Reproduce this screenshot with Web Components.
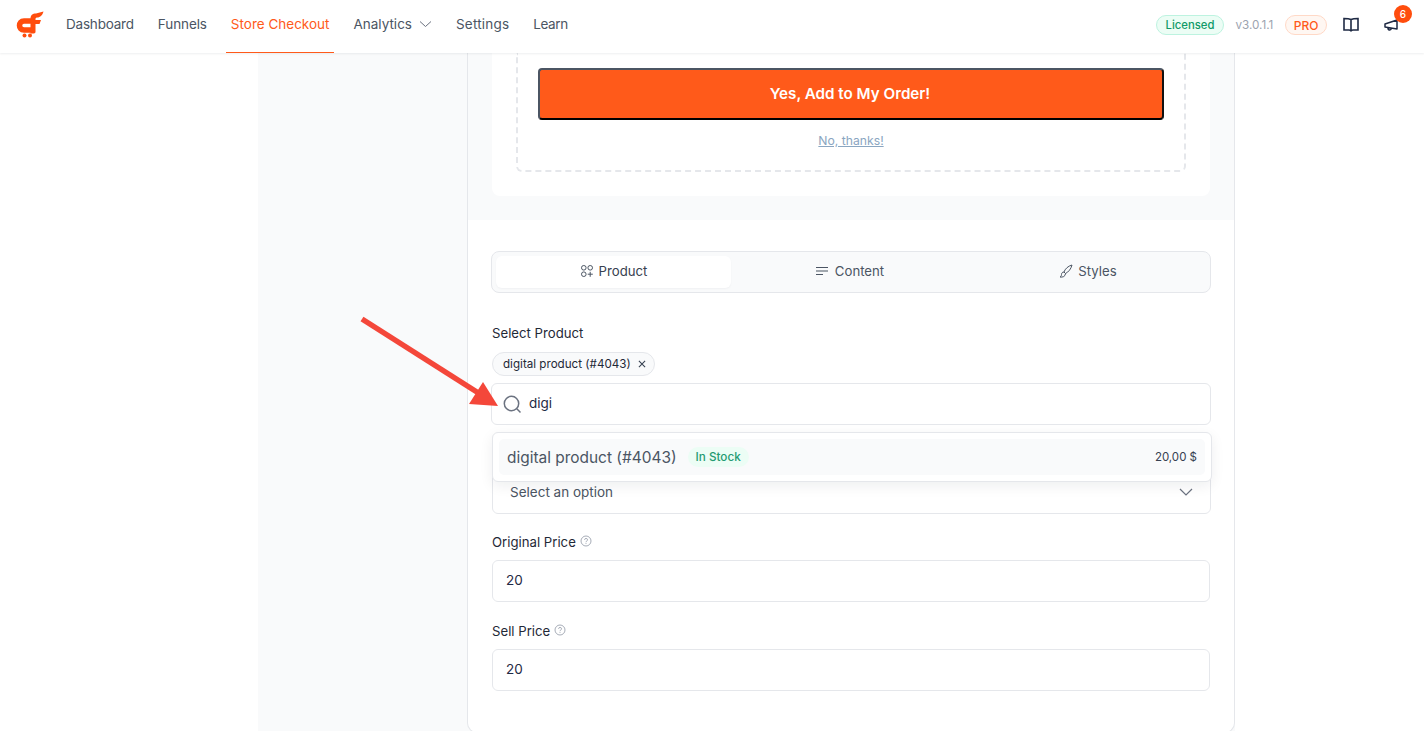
<!DOCTYPE html>
<html lang="en"><head><meta charset="utf-8"><title>Store Checkout</title>
<style>
html,body{margin:0;height:731px;overflow:hidden;background:#fff;font-family:Inter,"Noto Sans",sans-serif;color:#1f2937}
</style></head><body>
<app-shell>
  <app-nav slot="nav"></app-nav>
  <offer-preview></offer-preview>
  <tab-bar></tab-bar>
  <product-form></product-form>
</app-shell>
<script>
function comp(name,html){
  const t=document.createElement('template');t.innerHTML=html;
  customElements.define(name,class extends HTMLElement{
    constructor(){super();this.attachShadow({mode:'open'}).appendChild(t.content.cloneNode(true))}
  });
}
comp('app-shell',`<style>
:host{display:block;position:relative;height:731px;overflow:hidden}
.work{margin-left:258px;width:977px;height:678px;background:#f9fafb;padding-left:209px;box-sizing:border-box}
.card{width:768px;height:680px;box-sizing:border-box;background:#fff;border:1px solid #e5e7eb;border-top:0;border-radius:0 0 10px 10px;overflow:hidden}
.arrow{position:absolute;left:355px;top:312px;width:150px;height:100px;pointer-events:none}
</style>
<slot name="nav"></slot>
<div class="work"><div class="card"><slot></slot></div></div>
<svg class="arrow" viewBox="355 312 150 100"><path d="M362 319L480 394" stroke="#f4473a" stroke-width="5.500" fill="none"/><path d="M498 406L469 404L483 382Z" fill="#f4473a"/></svg>`);

comp('nav-link',`<style>
:host{display:flex;align-items:center;height:53px;box-sizing:border-box;padding:0 5px 5px;margin:0 7px;font-size:13.5px;color:#4b5563;gap:7px;white-space:nowrap;border-bottom:1px solid transparent}
:host([active]){color:#ff5a1a;border-bottom-color:#ff5a1a}
</style><slot></slot>`);

comp('status-pill',`<style>
:host{display:inline-flex;align-items:center;height:20px;box-sizing:border-box;padding:0 9px;border-radius:10px;font-size:11.3px;font-weight:500;border:1px solid #bdf3e0;background:#ecfdf5;color:#119a68}
:host([tone=pro]){border-color:#ffd9c7;background:#fff7f2;color:#ff5a1a;font-size:12px;padding:0 7.5px}
</style><slot></slot>`);

comp('app-nav',`<style>
:host{display:flex;align-items:center;height:53px;background:#fff;box-shadow:0 1px 2px rgba(17,24,39,.07);position:relative;z-index:2;padding:0 15px 0 16px;box-sizing:border-box}
.logo{width:28px;height:28px;margin:0 10px 3px 0;flex:none}
.links{display:flex;margin-right:auto}
.right{display:flex;align-items:center;margin-bottom:3px}
.ver{font-size:11.7px;color:#9ca3af;margin:0 12px 0 11px}
.book{margin-left:15px;width:18px;height:18px}
.bell{position:relative;margin:0 8px 0 23px;width:18px;height:18px}
.bell svg{width:18px;height:18px;display:block}
.count{position:absolute;left:11px;top:-11px;width:18px;height:18px;border-radius:50%;background:#ff4d0d;color:#fff;font-size:10px;font-weight:500;display:flex;align-items:center;justify-content:center}
.chev{width:13px;height:12px}
</style>
<svg class="logo" viewBox="16 11 28 28"><path d="M31 21H24C21 21 19.500 23 19.500 25.500C19.500 28 21 30 24 30H33" fill="none" stroke="#ff4d0d" stroke-width="5.500"/><path d="M30.500 32V19C30.500 15 32.500 13.500 36 13.500L43.500 11.500C42.500 15 40.500 17.500 37 17.500C35.500 17.500 35.500 18.500 35.500 20H41L39.500 24H35.500V32C35.500 33 34 33.500 33 33.500H30.500Z" fill="#ff4d0d"/><circle cx="24.500" cy="35.500" r="2" fill="#ff4d0d"/><circle cx="30" cy="35.500" r="2" fill="#ff4d0d"/></svg>
<div class="links">
<nav-link style="letter-spacing:-.2px">Dashboard</nav-link><nav-link style="letter-spacing:-.1px">Funnels</nav-link><nav-link active>Store Checkout</nav-link>
<nav-link>Analytics<svg class="chev" viewBox="0 0 13 12"><path d="M1 3.500L6.500 8.500L12 3.500" fill="none" stroke="#6b7280" stroke-width="1"/></svg></nav-link>
<nav-link style="letter-spacing:.2px">Settings</nav-link><nav-link style="letter-spacing:-.4px">Learn</nav-link></div>
<div class="right"><status-pill>Licensed</status-pill><span class="ver">v3.0.1.1</span><status-pill tone="pro">PRO</status-pill>
<svg class="book" viewBox="0 0 18 18"><path d="M9 3.500C7.500 2.800 5 2.500 2 2.500V14H7C8 14 9 14.500 9 15.500C9 14.500 10 14 11 14H16V2.500C13 2.500 10.500 2.800 9 3.500ZM9 3.500V15.500" fill="none" stroke="#1f2a44" stroke-width="1.600"/></svg>
<div class="bell"><svg viewBox="0 0 18 18"><path d="M2 8L14 4V13L2 11ZM5 11.500C4.500 14.500 8 15 8.500 12" fill="none" stroke="#1f2a44" stroke-width="1.500" stroke-linejoin="round"/></svg><span class="count">6</span></div></div>`);

comp('offer-preview',`<style>
:host{display:block;background:#f9fafb;padding:0 24px 24px;height:143px}
.panel{height:143px;background:#fff;border-radius:0 0 8px 8px;padding:0 24px;box-sizing:border-box}
.dash{height:119px;box-sizing:border-box;border:2px dashed #e5e7eb;border-top:0;border-radius:0 0 6px 6px;padding:15px 20px 0;display:flex;flex-direction:column;align-items:center}
button{all:unset;box-sizing:border-box;width:100%;height:52px;padding:0 2px 2px 0;background:#ff5a1a;border:2px solid #4b5563;border-bottom-color:#000;border-right-color:#111;border-radius:4px;color:#fff;font:600 15.200px Inter,sans-serif;text-align:center}
a{margin-top:13px;font-size:12.200px;color:#8aa6c1;text-decoration:underline}
</style><div class="panel"><div class="dash"><button>Yes, Add to My Order!</button><a>No, thanks!</a></div></div>`);

comp('tab-item',`<style>
:host{flex:1;display:flex;align-items:center;justify-content:center;gap:5px;font-size:13.200px;color:#4b5563;border-radius:6px;padding-bottom:2px;box-sizing:border-box}
:host([active]){flex:none;width:235px;background:#fff;color:#374151;box-shadow:0 1px 2px rgba(17,24,39,.04)}
</style><slot></slot>`);

comp('tab-bar',`<style>
:host{display:flex;margin:31px 23px 0;height:42px;box-sizing:border-box;padding:4px;background:#f9fafb;border:1px solid #e5e7eb;border-radius:8px;gap:2.500px}
svg{width:14px;height:14px}
</style>
<tab-item active><svg viewBox="0 0 14 14" fill="none" stroke="#4b5563" stroke-width="1"><circle cx="3.800" cy="3.800" r="2.300"/><circle cx="10.200" cy="3.800" r="2.300"/><circle cx="3.800" cy="10.200" r="2.300"/><path d="M10.200 7.800V12.800M7.700 10.200H12.800"/></svg>Product</tab-item>
<tab-item style="gap:6px;padding-right:4px"><svg viewBox="0 0 14 14" fill="none" stroke="#4b5563" stroke-width="1.100"><path d="M1 3.500H13M1 7H13M1 10.500H8"/></svg>Content</tab-item>
<tab-item style="padding-right:2px"><svg viewBox="0 0 14 14" fill="none" stroke="#4b5563" stroke-width="1"><path d="M13 1C9 2 6 5 5 8L6.500 9.500C9.500 8 12 5 13 1ZM5 8C3 8 2.500 9.500 2.500 10.500C2.500 11.500 2 12.500 1 13C3.500 13.500 6.500 12.500 6.500 9.500"/></svg>Styles</tab-item>`);

comp('field-label',`<style>
:host{display:flex;align-items:center;gap:4px;font-size:13.200px;color:#1f2937;height:16px}
svg{width:12px;height:12px;margin-top:-2px}
:host(:not([help])) svg{display:none}
</style><slot></slot><svg viewBox="0 0 12 12" fill="none" stroke="#9ca3af" stroke-width=".9"><circle cx="6" cy="6" r="5"/><path d="M4.500 4.800C4.500 3 7.600 3 7.600 4.800C7.600 6 6 5.800 6 7.200M6 8.200V9"/></svg>`);

comp('text-box',`<style>
:host{display:flex;align-items:center;height:42px;box-sizing:border-box;background:#fff;border:1px solid #e5e7eb;border-radius:6px;padding:0 13px 2px;font-size:13.500px;color:#1f2a44}
</style><slot></slot>`);

comp('product-form',`<style>
:host{display:block;position:relative;padding:32px 24px 0}
.chip{display:inline-flex;align-items:center;gap:7px;height:24px;box-sizing:border-box;margin-top:11px;border:1px solid #e5e7eb;background:#f9fafb;border-radius:12px;padding:0 8px 0 10px;font-size:11.640px;color:#1f2937}
.chip svg{width:8px;height:8px}
.search{margin:7px -1px 0;padding-left:10px;gap:7px}
.search svg{width:20px;height:20px;margin-bottom:-2px}
.sel{margin-top:47px;color:#4b5563;justify-content:space-between;padding:0 17px 2px;margin-right:-1px}
.sel svg{width:14px;height:14px}
.orig{margin-top:20px}
.box{margin-top:10px}
.sell{margin-top:21px}
.drop{position:absolute;left:24px;top:139px;width:720px;height:50px;box-sizing:border-box;background:#fff;border:1px solid #e5e7eb;border-radius:6px;padding:6px;box-shadow:0 4px 14px rgba(17,24,39,.07)}
.item{height:36px;background:#f9fafb;border-radius:5px;display:flex;align-items:center;padding:0 8px;box-sizing:border-box;font-size:15.450px;color:#4b5563}
.stock{margin-left:11px;background:#ecfdf5;color:#259b72;font-size:11.700px;padding:3px 8px;border-radius:10px;font-weight:500}
.price{margin-left:auto;font-size:11.500px;color:#374151}
</style>
<field-label>Select Product</field-label>
<div class="chip">digital product (#4043)<svg viewBox="0 0 9 9"><path d="M1 1L8 8M8 1L1 8" stroke="#374151" stroke-width="1.200"/></svg></div>
<text-box class="search"><svg viewBox="0 0 20 20" fill="none" stroke="#6b7280" stroke-width="1.500"><circle cx="9.500" cy="9.500" r="7.200"/><path d="M14.800 14.800L18.500 18.500"/></svg>digi</text-box>
<text-box class="sel"><span>Select an option</span><svg viewBox="0 0 14 14"><path d="M1 4L7 10L13 4" fill="none" stroke="#6b7280" stroke-width="1.200"/></svg></text-box>
<field-label class="orig" help>Original Price</field-label>
<text-box class="box">20</text-box>
<field-label class="sell" help>Sell Price</field-label>
<text-box class="box">20</text-box>
<div class="drop"><div class="item">digital product (#4043)<span class="stock">In Stock</span><span class="price">20,00 $</span></div></div>`);
</script>
</body></html>
